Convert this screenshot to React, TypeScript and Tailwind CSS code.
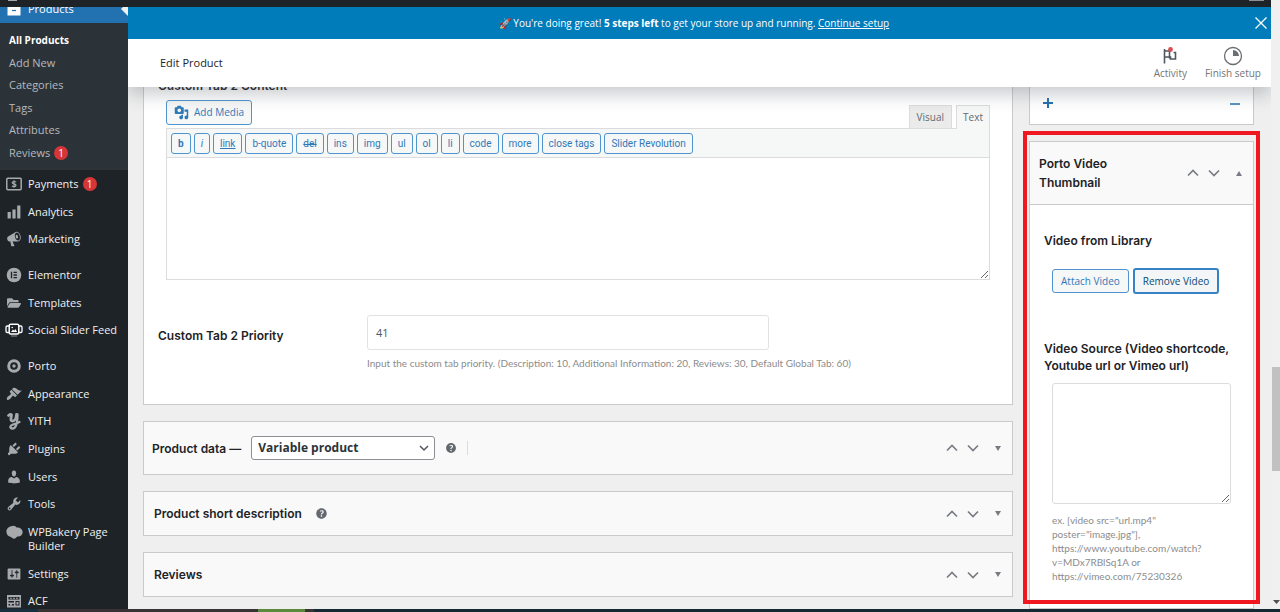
import type { ReactNode } from "react";
import { FaFolderOpen } from "react-icons/fa";

const heading = "font-['Inter',sans-serif] font-semibold text-[12px] leading-[17px] text-[#1d2327]";
const hint = "font-['Lato',sans-serif] text-[#8c8c8c]";
const wpButton =
  "shrink-0 whitespace-nowrap rounded-[3px] border border-[#4f94cf] bg-[#f6f7f7] text-[#3079b8]";

function Dash({ d, className = "size-4" }: { d: string; className?: string }) {
  return (
    <svg viewBox="0 0 20 20" fill="currentColor" className={className} aria-hidden="true">
      <path d={d} />
    </svg>
  );
}

const paths = {
  bars: "M18 18V2h-4v16h4zm-6 0V7H8v11h4zm-6 0v-8H2v8h4z",
  megaphone:
    "M18.15 5.94c.46 1.62.38 3.22-.02 4.48-.42 1.28-1.26 2.18-2.3 2.48-.16.06-.26.06-.4.06-.06.02-.12.02-.18.02-.06.02-.14.02-.22.02h-6.8l2.22 5.5c.02.14-.06.26-.14.34-.08.1-.24.16-.34.16H6.95c-.1 0-.26-.06-.34-.16-.08-.08-.16-.2-.14-.34l-1-5.5H4.25l-.02-.02c-.5.06-1.08-.18-1.54-.62s-.88-1.08-1.06-1.88c-.24-.8-.2-1.56-.02-2.2.18-.62.58-1.08 1.06-1.3l.02-.02 9-5.4c.1-.06.18-.1.24-.16.06-.04.14-.08.24-.12.16-.08.28-.12.5-.18 1.04-.3 2.24.1 3.22.98s1.84 2.24 2.26 3.86zm-2.58 5.98h-.02c.4-.1.74-.34 1.04-.7.58-.7.86-1.76.86-3.04 0-.64-.1-1.3-.28-1.98-.34-1.36-1.02-2.5-1.78-3.24s-1.68-1.1-2.46-.88c-.82.22-1.4.96-1.7 2-.32 1.04-.28 2.36.06 3.72.38 1.36 1 2.5 1.8 3.24.78.74 1.62 1.1 2.48.88zm-2.54-7.08c.22-.04.42-.02.62.04.38.16.76.48 1.02 1s.42 1.2.42 1.78c0 .3-.04.56-.12.8-.18.48-.44.84-.86.94-.34.1-.8-.06-1.14-.4s-.64-.86-.78-1.5c-.18-.62-.12-1.24.02-1.72s.48-.84.82-.94z",
  brush:
    "M14.48 11.06L7.41 3.99l1.5-1.5c.5-.56 2.3-.47 3.51.32 1.21.8 1.43 1.28 2.91 2.1 1.18.64 2.45 1.26 4.45.85zm-.71.71L6.7 4.7 4.93 6.47c-.39.39-.39 1.02 0 1.41l1.06 1.06c.39.39.39 1.03 0 1.42-.6.6-1.43 1.11-2.21 1.69-.35.26-.7.53-1.01.84C1.43 14.23.4 16.08 1.4 17.07c.99 1 2.84-.03 4.18-1.36.31-.31.58-.66.85-1.02.57-.78 1.08-1.61 1.69-2.21.39-.39 1.02-.39 1.41 0l1.06 1.06c.39.39 1.02.39 1.41 0z",
  plug: "M13.11 4.36L9.87 7.6 8 5.73l3.24-3.24c.35-.34 1.05-.2 1.56.32.52.51.66 1.21.31 1.55zm-8 1.77l.91-1.12 9.01 9.01-1.19.84c-.71.71-2.63 1.16-3.82 1.16H6.14L4.9 17.26c-.59.59-1.54.59-2.12 0-.59-.58-.59-1.53 0-2.12l1.24-1.24v-3.88c0-1.13.4-3.19 1.09-3.89zm7.26 3.97l3.24-3.24c.34-.35 1.04-.21 1.55.31.52.51.66 1.21.31 1.55l-3.24 3.25z",
  user: "M10 9.25c-2.27 0-2.73-3.44-2.73-3.44C7 4.02 7.82 2 9.97 2c2.16 0 2.98 2.02 2.71 3.81 0 0-.41 3.44-2.68 3.44zm0 2.57L12.72 10c2.39 0 4.52 2.33 4.52 4.53v2.49s-3.65 1.13-7.24 1.13c-3.65 0-7.24-1.13-7.24-1.13v-2.49c0-2.25 1.94-4.48 4.47-4.48z",
  wrench:
    "M16.68 9.77c-1.34 1.34-3.3 1.67-4.95.99l-5.41 6.52c-.99.99-2.59.99-3.58 0s-.99-2.59 0-3.57l6.52-5.42c-.68-1.65-.35-3.61.99-4.95 1.28-1.28 3.12-1.62 4.72-1.06l-2.89 2.89 2.82 2.82 2.86-2.87c.53 1.58.18 3.39-1.08 4.65zM3.81 16.21c.4.39 1.04.39 1.43 0 .4-.4.4-1.04 0-1.43-.39-.4-1.03-.4-1.43 0-.39.39-.39 1.03 0 1.43z",
  sliders:
    "M18 16V4c0-.55-.45-1-1-1H3c-.55 0-1 .45-1 1v12c0 .55.45 1 1 1h14c.55 0 1-.45 1-1zM8 11h1c.55 0 1 .45 1 1s-.45 1-1 1H8v1.5c0 .28-.22.5-.5.5s-.5-.22-.5-.5V13H6c-.55 0-1-.45-1-1s.45-1 1-1h1V5.5c0-.28.22-.5.5-.5s.5.22.5.5V11zm5-2h-1c-.55 0-1-.45-1-1s.45-1 1-1h1V5.5c0-.28.22-.5.5-.5s.5.22.5.5V7h1c.55 0 1 .45 1 1s-.45 1-1 1h-1v5.5c0 .28-.22.5-.5.5s-.5-.22-.5-.5V9z",
  help: "M17 10c0-3.87-3.14-7-7-7-3.87 0-7 3.13-7 7s3.13 7 7 7c3.86 0 7-3.13 7-7zm-6.3 1.48H9.14v-.43c0-.38.08-.7.24-.98s.46-.57.88-.89c.41-.29.68-.53.81-.71.14-.18.2-.39.2-.62 0-.25-.09-.44-.28-.58-.19-.13-.45-.19-.79-.19-.58 0-1.25.19-2 .57l-.64-1.28c.87-.49 1.8-.74 2.77-.74.81 0 1.45.2 1.92.58.48.39.71.91.71 1.55 0 .43-.09.8-.29 1.11-.19.32-.57.67-1.11 1.06-.38.28-.61.49-.71.63-.1.15-.15.34-.15.57v.35zm-1.47 2.74c-.18-.17-.27-.42-.27-.73 0-.33.08-.58.26-.75s.43-.25.77-.25c.32 0 .57.09.75.26s.27.42.27.74c0 .3-.09.55-.27.72-.18.18-.43.27-.75.27-.33 0-.58-.09-.76-.26z",
  media:
    "M13 11V4c0-.55-.45-1-1-1h-1.67L9 1H5L3.67 3H2c-.55 0-1 .45-1 1v7c0 .55.45 1 1 1h10c.55 0 1-.45 1-1zM7 4.5c1.38 0 2.5 1.12 2.5 2.5S8.38 9.5 7 9.5 4.5 8.38 4.5 7 5.62 4.5 7 4.5zM14 6h5v10.5c0 1.38-1.12 2.5-2.5 2.5S14 17.88 14 16.5s1.12-2.5 2.5-2.5c.17 0 .34.02.5.05V9h-3V6zm-4 8.05V13h2v3.5c0 1.38-1.12 2.5-2.5 2.5S7 17.88 7 16.5 8.12 14 9.5 14c.17 0 .34.02.5.05z",
};

function PaymentsIcon() {
  return (
    <svg viewBox="0 0 16 14" className="h-[14px] w-4" fill="none" stroke="currentColor" aria-hidden="true">
      <rect x="0.8" y="1.3" width="14.4" height="11.4" rx="1" strokeWidth="1.5" />
      <path d="M10 5.2C9.6 4.4 6.2 4 6.2 5.7c0 1.6 3.8.9 3.8 2.6 0 1.8-3.5 1.4-4 .4M8 3.2v7.6" strokeWidth="1.2" />
    </svg>
  );
}

function ElementorIcon() {
  return (
    <svg viewBox="0 0 16 16" className="size-4" aria-hidden="true">
      <circle cx="8" cy="8" r="7.3" fill="currentColor" />
      <path d="M5.5 4.8v6.4M7.5 5.4h3.4M7.5 8h3.4M7.5 10.6h3.4" stroke="#1d2327" strokeWidth="1.3" />
    </svg>
  );
}

function SliderFeedIcon() {
  return (
    <svg viewBox="0 0 18 14" className="h-[14px] w-[18px] text-white" fill="none" stroke="currentColor" aria-hidden="true">
      <rect x="4.2" y="1.2" width="9.6" height="9.8" rx="1.5" strokeWidth="1.5" />
      <path
        d="M4 3H2.2C1.4 3 1 3.5 1 4.2v4C1 9 1.4 9.5 2.2 9.5H4M14 3h1.8c.8 0 1.2.5 1.2 1.2v4c0 .8-.4 1.3-1.2 1.3H14"
        strokeWidth="1.3"
      />
      <path d="M6 9l2-2.6 1.3 1.3L10.5 6 12 9z" fill="currentColor" stroke="none" />
      <circle cx="7.2" cy="4.5" r="0.8" fill="currentColor" stroke="none" />
      <path d="M6.5 13h5" strokeDasharray="1 1" />
    </svg>
  );
}

function PortoIcon() {
  return (
    <svg viewBox="0 0 16 16" className="size-4" aria-hidden="true">
      <circle cx="8" cy="8" r="5.3" fill="none" stroke="currentColor" strokeWidth="3" />
      <circle cx="8" cy="8" r="1.7" fill="currentColor" />
    </svg>
  );
}

function YithIcon() {
  return (
    <svg viewBox="0 0 16 18" className="h-[18px] w-4" fill="none" stroke="currentColor" strokeLinecap="round" aria-hidden="true">
      <path d="M2.5 3.5C4 1.6 6 2 5.3 4.5 4.6 7 4.5 9 6.500 9c2.200 0 3.700-3 4-6.500" strokeWidth="2.8" />
      <path d="M11.5 2.5C11.5 8 11 16.5 6.5 16.5c-3.5 0-2.500-3.500 1-4.200 2.500-.6 4.500-1 6-2.300" strokeWidth="2.3" />
    </svg>
  );
}

function BakeryIcon() {
  return (
    <svg viewBox="0 0 17 15" className="h-[15px] w-[17px]" fill="currentColor" aria-hidden="true">
      <path d="M6.5.9C8.5.6 9.8 1.5 10.600 2.500c3.300-.2 6 1.600 6 4.600 0 3.200-2.700 4.700-5.300 4.500-.8.7-1.500 1.900-3 2.200-1.500.3-2.200-1.300-3.500-1.700C2.200 11.500.4 9.600.4 6.600.4 3.500 3.200 1.100 6.500.9z" />
    </svg>
  );
}

function AcfIcon() {
  return (
    <svg viewBox="0 0 16 14" className="h-[14px] w-4" aria-hidden="true">
      <path
        fill="currentColor"
        fillRule="evenodd"
        d="M1 1h14v12.500H1zM2.500 3v2.500h11V3zM2.500 7v1.500H8V7zM2.500 10v1.500H8V10zM9.500 7v4.500h4V7z"
      />
      <path fill="currentColor" d="M4 3.700h2v1H4zM7 3.700h2v1H7zM10 3.700h2v1h-2zM4 10h2v1.500H4zM10.500 8h2v2.500h-2z" />
    </svg>
  );
}

type Item = { label: string; icon: ReactNode; badge?: number };

const shopItems: Item[] = [
  { label: "Payments", icon: <PaymentsIcon />, badge: 1 },
  { label: "Analytics", icon: <Dash d={paths.bars} /> },
  { label: "Marketing", icon: <Dash d={paths.megaphone} /> },
];
const builderItems: Item[] = [
  { label: "Elementor", icon: <ElementorIcon /> },
  { label: "Templates", icon: <FaFolderOpen className="size-[14px]" /> },
  { label: "Social Slider Feed", icon: <SliderFeedIcon /> },
];
const siteItems: Item[] = [
  { label: "Porto", icon: <PortoIcon /> },
  { label: "Appearance", icon: <Dash d={paths.brush} /> },
  { label: "YITH", icon: <YithIcon /> },
  { label: "Plugins", icon: <Dash d={paths.plug} /> },
  { label: "Users", icon: <Dash d={paths.user} /> },
  { label: "Tools", icon: <Dash d={paths.wrench} /> },
];
const lastItems: Item[] = [
  { label: "Settings", icon: <Dash d={paths.sliders} /> },
  { label: "ACF", icon: <AcfIcon /> },
];

function Badge({ n }: { n: number }) {
  return (
    <span className="ml-1 flex size-[14px] items-center justify-center rounded-full bg-[#d63638] text-[10px] leading-none text-white">
      {n}
    </span>
  );
}

function MenuGroup({ items, className }: { items: Item[]; className: string }) {
  return (
    <ul className={`flex shrink-0 flex-col ${className}`}>
      {items.map((item) => (
        <li key={item.label} className="flex-1">
          <a href="#" className="flex h-full items-center whitespace-nowrap pl-[5px] text-[#f0f0f1]">
            <span className="mr-[5px] flex w-[18px] shrink-0 justify-center text-[#a7aaad]">{item.icon}</span>
            {item.label}
            {item.badge && <Badge n={item.badge} />}
          </a>
        </li>
      ))}
    </ul>
  );
}

function Sidebar() {
  return (
    <nav className="w-32 shrink-0 overflow-hidden bg-[#1d2327] text-[11px] leading-[14px]">
      <a href="#" className="-mt-3 flex h-7 items-center bg-[#2271b1] pl-[5px] text-white">
        <span className="mr-[5px] flex w-[18px] justify-center">
          <svg viewBox="0 0 14 14" className="size-[14px]" aria-hidden="true">
            <path fill="white" d="M1 0h12v4H1zM.5 5h13v8.500H.5z" />
            <path stroke="#2271b1" strokeWidth="1.2" d="M5 8.500h4" />
          </svg>
        </span>
        Products
        <svg viewBox="0 0 7 14" className="ml-auto h-[14px] w-[7px]" aria-hidden="true">
          <path fill="#f0f0f1" d="M7 0v14L0 7z" />
        </svg>
      </a>
      <ul className="flex h-[147px] flex-col justify-between bg-[#2c3338] px-[9px] pt-[6px] pb-[6px] text-[#b4b9be]">
        {["All Products", "Add New", "Categories", "Tags", "Attributes", "Reviews"].map((label, i) => (
          <li key={label}>
            <a href="#" className={`flex h-[22px] items-center ${i === 0 ? "text-[10px] font-bold text-white" : ""}`}>
              {label}
              {label === "Reviews" && <Badge n={1} />}
            </a>
          </li>
        ))}
      </ul>
      <MenuGroup items={shopItems} className="h-[83px]" />
      <MenuGroup items={builderItems} className="mt-2 h-[83px]" />
      <MenuGroup items={siteItems} className="mt-2 h-[166px]" />
      <a href="#" className="flex h-[42px] items-start pt-[7px] pl-[5px] text-[#f0f0f1]">
        <span className="mr-[5px] flex w-[18px] shrink-0 justify-center text-[#a7aaad]">
          <BakeryIcon />
        </span>
        WPBakery Page Builder
      </a>
      <MenuGroup items={lastItems} className="h-[55px]" />
    </nav>
  );
}

function PanelControls({ open = false }: { open?: boolean }) {
  return (
    <div className="ml-auto flex shrink-0 items-center text-[#787c82]">
      <button type="button" aria-label="Move up" className="flex w-[21px] justify-center">
        <svg viewBox="0 0 12 8" className="h-2 w-3" fill="none" stroke="currentColor" strokeWidth="1.7">
          <path d="M1 6.500l5-5 5 5" />
        </svg>
      </button>
      <button type="button" aria-label="Move down" className="flex w-[21px] justify-center">
        <svg viewBox="0 0 12 8" className="h-2 w-3" fill="none" stroke="currentColor" strokeWidth="1.7">
          <path d="M1 1.500l5 5 5-5" />
        </svg>
      </button>
      <button type="button" aria-label="Toggle panel" className="flex w-[29px] justify-center">
        <svg viewBox="0 0 6 5" className="h-[5px] w-[6px]" fill="currentColor">
          <path d={open ? "M0 5h6L3 0z" : "M0 0h6L3 5z"} />
        </svg>
      </button>
    </div>
  );
}

const quickTags = [
  { label: "b", style: "font-bold" },
  { label: "i", style: "italic" },
  { label: "link", style: "underline" },
  { label: "b-quote", style: "" },
  { label: "del", style: "line-through" },
  { label: "ins", style: "" },
  { label: "img", style: "" },
  { label: "ul", style: "" },
  { label: "ol", style: "" },
  { label: "li", style: "" },
  { label: "code", style: "" },
  { label: "more", style: "" },
  { label: "close tags", style: "" },
  { label: "Slider Revolution", style: "" },
];

function CustomTabPanel() {
  return (
    <section className="border border-t-0 border-[#c9cacc] bg-white pb-[33px]">
      <label htmlFor="tab-content" className={`${heading} ml-[14px] block pt-[6px] pb-[6px]`}>
        Custom Tab 2 Content
      </label>
      <div className="mr-[22px] ml-[22px]">
        <div className="flex items-start">
          <button type="button" className={`${wpButton} flex h-[25px] items-center gap-[5px] px-[7px] text-[10px]`}>
            <Dash d={paths.media} className="size-[15px]" />
            Add Media
          </button>
          <div className="ml-auto flex gap-1 pt-[5px] text-[10px] text-[#646970]">
            <button type="button" className="h-[23px] border border-b-0 border-[#dcdcde] bg-[#ebebeb] px-[7px]">
              Visual
            </button>
            <button type="button" className="relative z-10 -mb-px h-6 border border-b-0 border-[#dcdcde] bg-[#f6f7f7] px-[6px]">
              Text
            </button>
          </div>
        </div>
        <div className="border border-[#dcdcde]">
          <div className="flex h-[29px] items-center gap-[3px] border-b border-[#dcdcde] bg-[#f6f7f7] px-1 font-['Roboto',sans-serif]">
            {quickTags.map((tag) => (
              <button key={tag.label} type="button" className={`${wpButton} h-[21px] px-[6px] text-[10px] ${tag.style}`}>
                {tag.label}
              </button>
            ))}
          </div>
          <textarea id="tab-content" className="block h-[121px] w-full resize-y bg-white outline-none" />
        </div>
      </div>
      <div className="mt-[35px] flex items-start pl-[14px]">
        <label htmlFor="tab-priority" className={`${heading} w-[209px] shrink-0 pt-3`}>
          Custom Tab 2 Priority
        </label>
        <div className="min-w-0 flex-1">
          <input
            id="tab-priority"
            type="text"
            defaultValue="41"
            className="block h-[35px] w-[402px] max-w-full rounded-[3px] border border-[#e2e2e2] bg-white px-2 text-[11px] text-[#50575e] outline-none"
          />
          <p className={`${hint} mt-[6px] text-[10px] leading-[15px]`}>
            Input the custom tab priority. (Description: 10, Additional Information: 20, Reviews: 30, Default Global Tab: 60)
          </p>
        </div>
      </div>
    </section>
  );
}

const closedPanel = "flex items-center border border-[#c9cacc] bg-[#f9f9f9]";

function VideoPanel() {
  return (
    <section className="relative flex-1 border border-[#c9cacc] bg-white">
      <header className="flex h-[63px] items-center border-b border-[#c9cacc] bg-[#f9f9f9] pl-[9px]">
        <h2 className="w-24 font-['Inter',sans-serif] text-[12px] leading-[19px] font-semibold text-[#1d2327]">
          Porto Video Thumbnail
        </h2>
        <PanelControls open />
      </header>
      <div className="px-[14px] pt-[27px]">
        <h3 className={heading}>Video from Library</h3>
        <div className="mt-[19px] flex items-center gap-1 pl-2 text-[10px]">
          <button type="button" className={`${wpButton} h-6 px-2`}>
            Attach Video
          </button>
          <button
            type="button"
            className="h-[26px] shrink-0 rounded-[3px] border-2 border-[#3582c4] bg-[#f3f5f6] px-2 whitespace-nowrap text-[#0a4b78]"
          >
            Remove Video
          </button>
        </div>
        <label htmlFor="video-source" className={`${heading} mt-[46px] block`}>
          Video Source (Video shortcode, Youtube url or Vimeo url)
        </label>
        <div className="mt-[9px] px-2">
          <textarea
            id="video-source"
            className="block h-[121px] w-full resize rounded-[3px] border border-[#dcdcde] bg-white outline-none"
          />
          <p className={`${hint} mt-[9px] text-[10px] leading-[14px]`}>
            ex. [video src="url.mp4"
            <br />
            poster="image.jpg"],
            <br />
            https://www.youtube.com/watch?
            <br />
            v=MDx7RBlSq1A or
            <br />
            https://vimeo.com/75230326
          </p>
        </div>
      </div>
      {/* red marker drawn round the whole panel */}
      <div className="pointer-events-none absolute -top-[11px] -right-[7px] bottom-1 -left-[7px] border-4 border-[#f01820]" />
    </section>
  );
}

export default function App() {
  return (
    <div className="flex h-screen flex-col overflow-hidden bg-[#f0f0f1] font-['Open_Sans','Noto_Sans',sans-serif] text-[11px]">
      <div className="flex min-h-0 flex-1">
        <div className="flex min-w-0 flex-1 flex-col">
          <div className="flex h-[7px] shrink-0 items-start justify-between bg-[#1d2327] pr-[7px] pl-2">
            <div className="h-px w-[9px] bg-[#a7aaad]" />
            <div className="h-px w-[15px] bg-[#8c8f94]" />
          </div>
          <div className="flex min-h-0 flex-1">
            <Sidebar />
            <div className="flex min-w-0 flex-1 flex-col overflow-hidden bg-[#efefef]">
              <div className="relative z-20 shrink-0 shadow-[0_8px_16px_rgba(85,93,102,0.3)]">
                <div className="flex h-8 items-center bg-[#007cba] text-white">
                  <p className="flex-1 pl-[5px] text-center text-[10px]">
                    🚀 You're doing great! <strong className="font-bold">5 steps left</strong> to get your store up and
                    running.{" "}
                    <a href="#" className="underline">
                      Continue setup
                    </a>
                  </p>
                  <button type="button" aria-label="Dismiss" className="mr-1">
                    <svg viewBox="0 0 12 12" className="size-3" stroke="white" strokeWidth="1.3">
                      <path d="M.5.5l11 11M11.5.5l-11 11" />
                    </svg>
                  </button>
                </div>
                <header className="flex h-12 items-center bg-white pr-[10px] pl-8">
                  <h1 className="font-medium text-[#1d2327]">Edit Product</h1>
                  <div className="ml-auto flex gap-[18px] text-[10px] text-[#757575]">
                    <button type="button" className="flex flex-col items-center">
                      <svg viewBox="0 0 20 20" className="size-5" fill="none" stroke="#50575e" strokeWidth="1.6">
                        <path d="M4.500 3v14.500M4.500 5h5v7.500M4.500 11h6v2h5V6.500h-2" />
                        <circle cx="10.500" cy="3.500" r="2.400" fill="#d94f4f" stroke="none" />
                      </svg>
                      <span className="leading-[14px]">Activity</span>
                    </button>
                    <button type="button" className="flex flex-col items-center">
                      <svg viewBox="0 0 20 20" className="size-5" fill="none" stroke="#6a6e73" strokeWidth="1.3">
                        <circle cx="10" cy="10" r="8.500" />
                        <path d="M10 4a6 6 0 0 1 6 6h-6z" fill="#6a6e73" stroke="none" />
                      </svg>
                      <span className="leading-[14px]">Finish setup</span>
                    </button>
                  </div>
                </header>
              </div>
              {/* the page is scrolled, so its first rows sit under the sticky header */}
              <main className="-mt-4 flex min-h-0 flex-1 gap-4 pr-[17px] pl-[15px]">
                <div className="flex min-w-0 flex-1 flex-col gap-4">
                  <CustomTabPanel />
                  <section className={`${closedPanel} h-[54px] shrink-0 pl-2`}>
                    <label htmlFor="product-type" className={`${heading} mr-[10px]`}>
                      Product data —
                    </label>
                    <span className="relative flex items-center">
                      <select
                        id="product-type"
                        className="h-6 w-[184px] appearance-none rounded-[3px] border border-[#8c8f94] bg-white pl-[6px] text-[12px] font-bold text-[#2c3338]"
                      >
                        <option>Variable product</option>
                      </select>
                      <svg
                        viewBox="0 0 10 7"
                        className="pointer-events-none absolute right-[6px] h-[7px] w-[10px]"
                        fill="none"
                        stroke="#50575e"
                        strokeWidth="1.5"
                      >
                        <path d="M1 1l4 4 4-4" />
                      </svg>
                    </span>
                    <Dash d={paths.help} className="mx-[9px] size-[14px] text-[#646970]" />
                    <span className="h-[14px] w-px bg-[#dcdcde]" />
                    <PanelControls />
                  </section>
                  <section className={`${closedPanel} h-[45px] shrink-0 pl-[10px]`}>
                    <h2 className={heading}>Product short description</h2>
                    <Dash d={paths.help} className="ml-3 size-[15px] text-[#646970]" />
                    <PanelControls />
                  </section>
                  <section className={`${closedPanel} h-[45px] shrink-0 pl-[10px]`}>
                    <h2 className={heading}>Reviews</h2>
                    <PanelControls />
                  </section>
                </div>
                <div className="flex w-[225px] shrink-0 flex-col gap-4">
                  <div className="flex h-[54px] shrink-0 items-end justify-between border border-t-0 border-[#c9cacc] bg-white px-3 pb-[15px] text-[#2271b1]">
                    <button type="button" aria-label="Add">
                      <svg viewBox="0 0 12 12" className="size-3" stroke="currentColor" strokeWidth="2">
                        <path d="M6 1v10M1 6h10" />
                      </svg>
                    </button>
                    <button type="button" aria-label="Remove">
                      <svg viewBox="0 0 12 12" className="size-3" stroke="currentColor" strokeWidth="1.5">
                        <path d="M1 7h10" />
                      </svg>
                    </button>
                  </div>
                  <VideoPanel />
                </div>
              </main>
            </div>
          </div>
        </div>
        <div className="flex w-[9px] shrink-0 flex-col items-end bg-[#f0f0f0]">
          <div className="grow-[367]" />
          <div className="h-[104px] w-2 bg-[#c1c1c1]" />
          <div className="grow-[129]" />
          <svg viewBox="0 0 7 4" className="mb-[5px] h-1 w-[7px]" fill="#505050" aria-hidden="true">
            <path d="M0 0h7L3.500 4z" />
          </svg>
        </div>
      </div>
      {/* top edge of the desktop taskbar */}
      <div className="flex h-[3px] shrink-0 bg-[#132a35]">
        <div className="w-[38px] bg-[#17303f]" />
        <div className="w-[220px] bg-[#3a3335]" />
        <div className="w-[47px] bg-[#5c8a3c]" />
        <div className="w-[9px] bg-[#3a3335]" />
      </div>
    </div>
  );
}
